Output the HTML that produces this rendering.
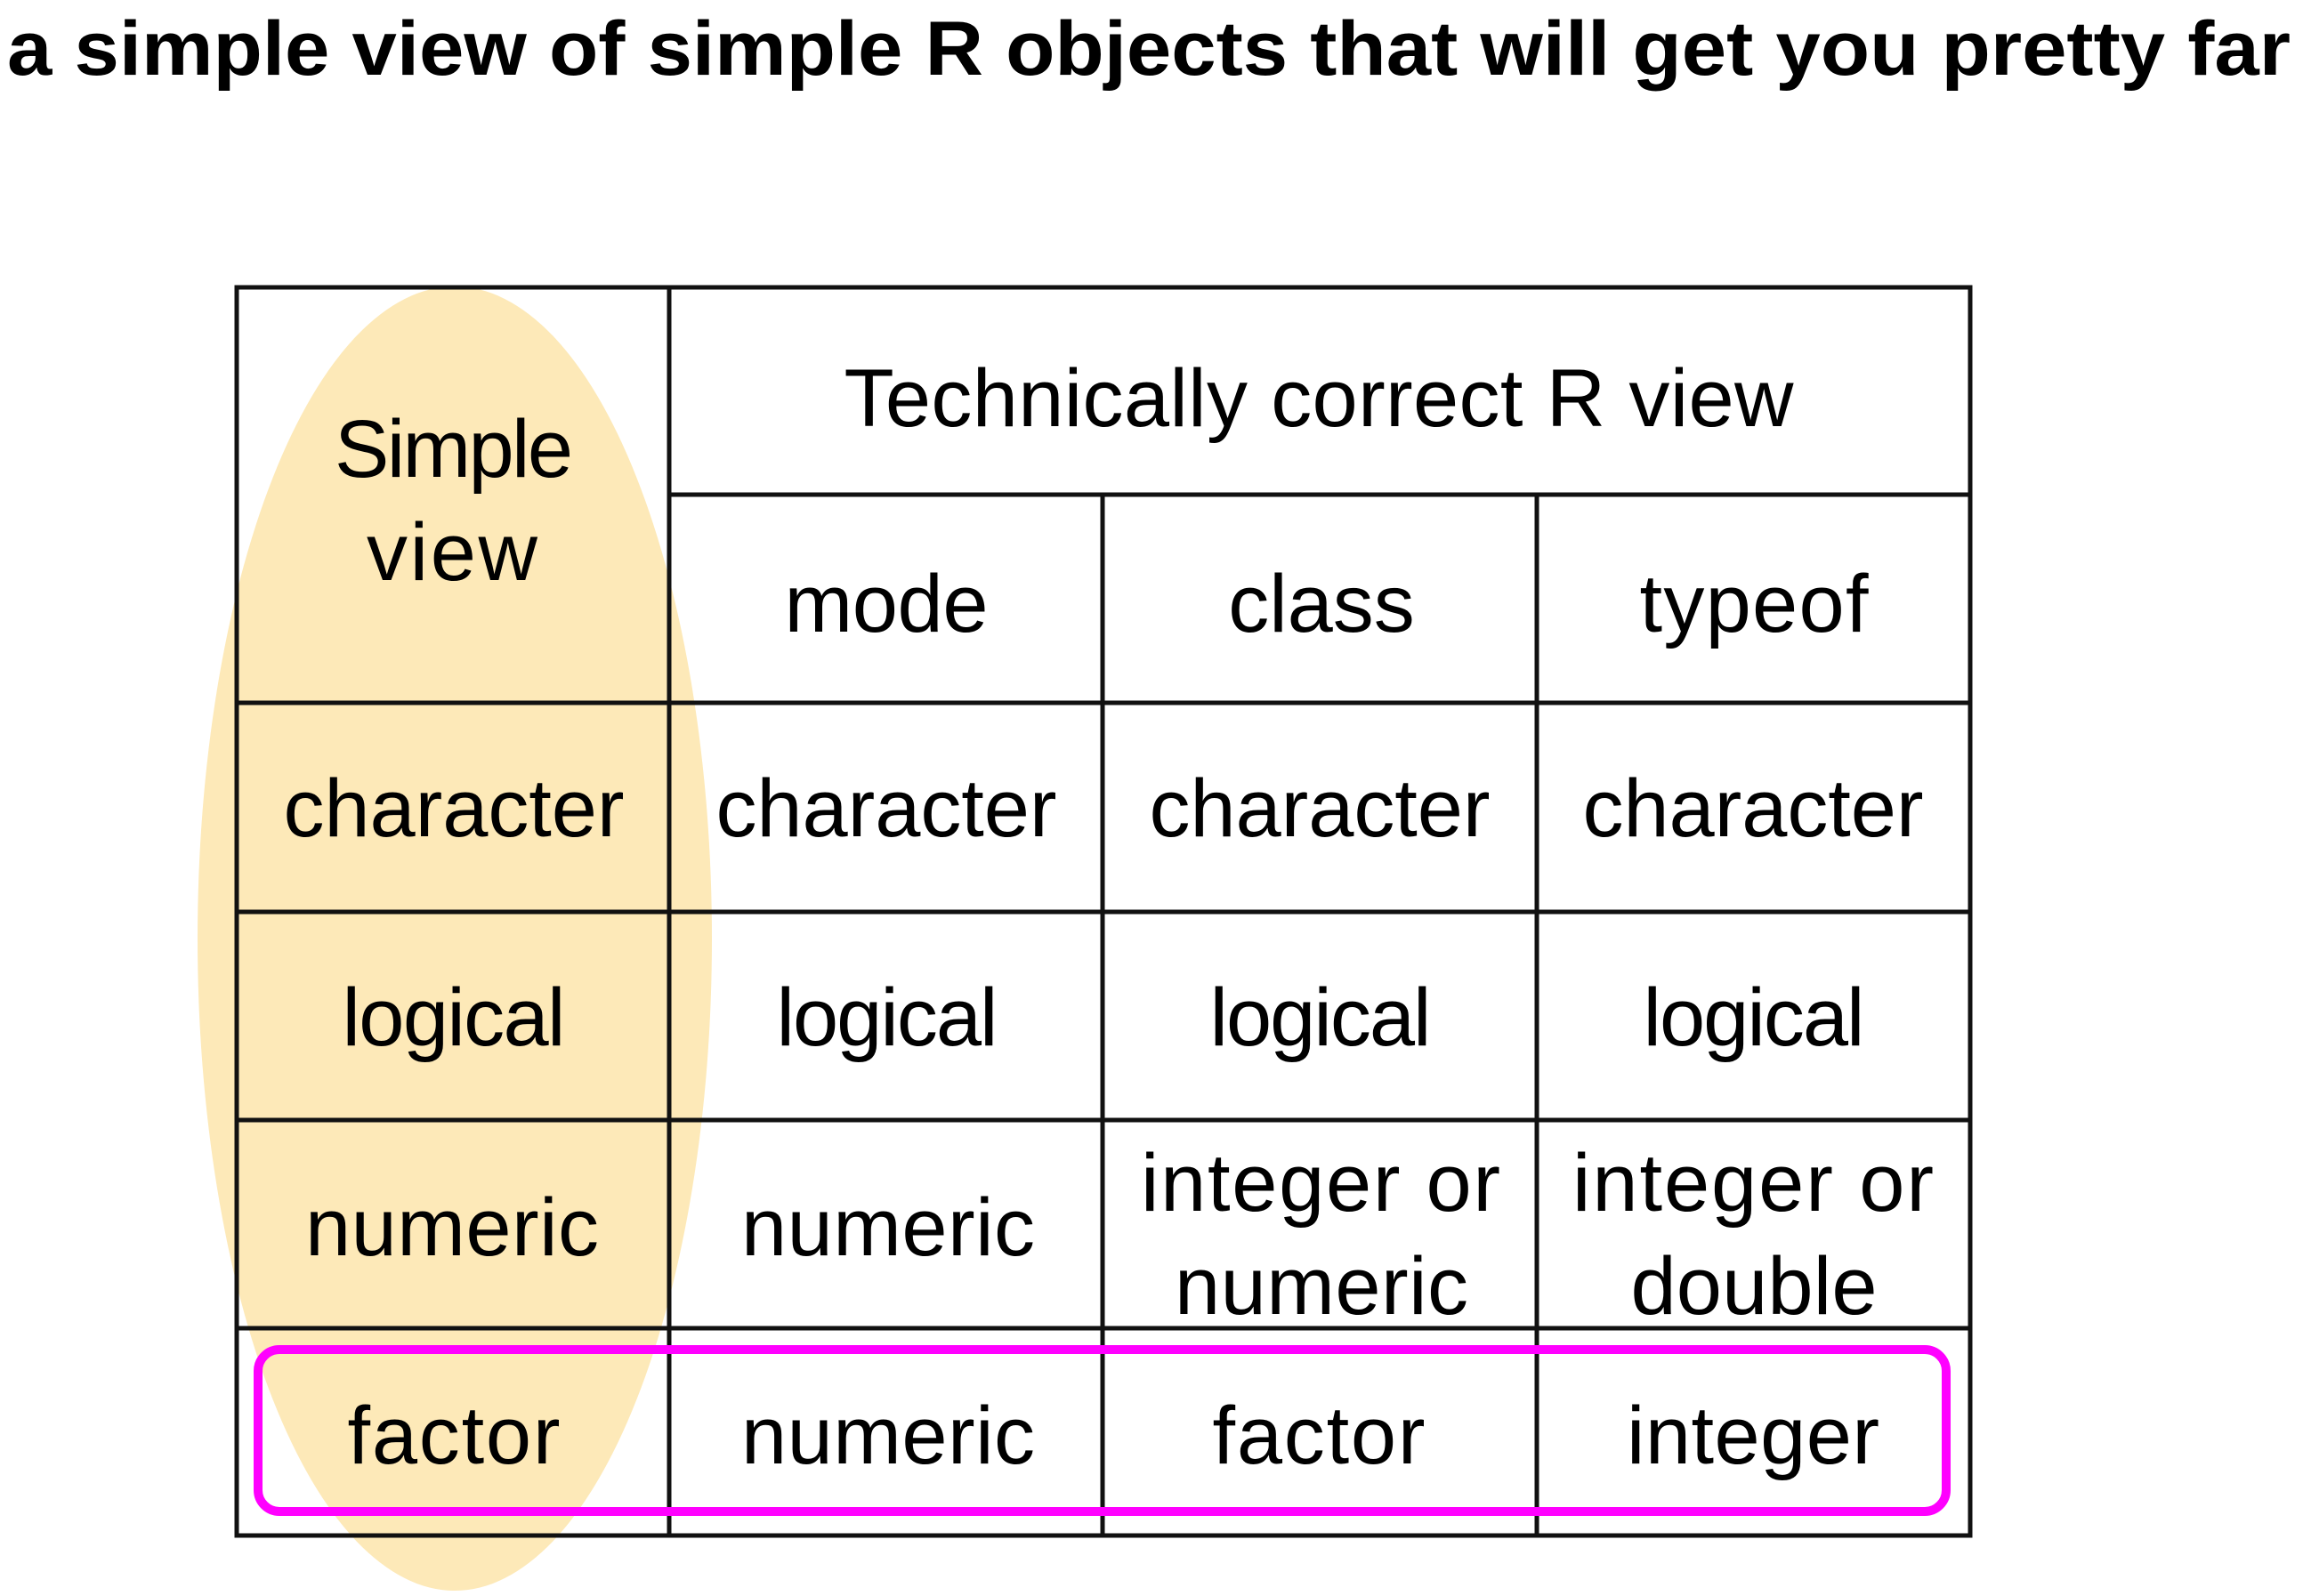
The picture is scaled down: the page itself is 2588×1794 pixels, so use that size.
<!DOCTYPE html>
<html><head><meta charset="utf-8"><style>
html,body{margin:0;padding:0;background:#fff;}
svg{display:block;}
text{font-family:"Liberation Sans",sans-serif;fill:#000;}
</style></head><body>
<svg width="2588" height="1794" viewBox="0 0 2588 1794" xmlns="http://www.w3.org/2000/svg">
<text x="8" y="84" font-size="86" font-weight="bold" textLength="2566" lengthAdjust="spacingAndGlyphs">a simple view of simple R objects that will get you pretty far</text>
<ellipse cx="511" cy="1055" rx="289" ry="733" fill="#fde9b8"/>
<g stroke="#111" stroke-width="5" fill="none">
<rect x="266" y="323" width="1948" height="1403"/>
<line x1="752" y1="323" x2="752" y2="1726"/>
<line x1="1239" y1="556" x2="1239" y2="1726"/>
<line x1="1727" y1="556" x2="1727" y2="1726"/>
<line x1="752" y1="556" x2="2214" y2="556"/>
<line x1="266" y1="790" x2="2214" y2="790"/>
<line x1="266" y1="1025" x2="2214" y2="1025"/>
<line x1="266" y1="1259" x2="2214" y2="1259"/>
<line x1="266" y1="1493" x2="2214" y2="1493"/>
</g>
<rect x="290" y="1517" width="1897" height="182" rx="24" fill="none" stroke="#ff00ff" stroke-width="10"/>
<g font-size="92" text-anchor="middle" lengthAdjust="spacingAndGlyphs">
<text x="1482" y="479" textLength="1067">Technically correct R view</text>
<text x="510" y="536" textLength="268">Simple</text>
<text x="508" y="652" textLength="192">view</text>
<text x="996" y="710" textLength="229">mode</text>
<text x="1485" y="710">class</text>
<text x="1971" y="710" textLength="257">typeof</text>
<text x="510" y="940" textLength="383">character</text>
<text x="996" y="940" textLength="383">character</text>
<text x="1483" y="940" textLength="383">character</text>
<text x="1970" y="940" textLength="383">character</text>
<text x="510" y="1175" textLength="251">logical</text>
<text x="997" y="1175" textLength="249">logical</text>
<text x="1484" y="1175" textLength="249">logical</text>
<text x="1971" y="1175" textLength="249">logical</text>
<text x="508" y="1411" textLength="330">numeric</text>
<text x="998" y="1411" textLength="330">numeric</text>
<text x="1484" y="1361" textLength="404">integer or</text>
<text x="1485" y="1477" textLength="330">numeric</text>
<text x="1970" y="1361" textLength="406">integer or</text>
<text x="1971" y="1477" textLength="277">double</text>
<text x="510" y="1645" textLength="239">factor</text>
<text x="998" y="1645" textLength="330">numeric</text>
<text x="1482" y="1645" textLength="239">factor</text>
<text x="1970" y="1645" textLength="284">integer</text>
</g>
</svg>
</body></html>
